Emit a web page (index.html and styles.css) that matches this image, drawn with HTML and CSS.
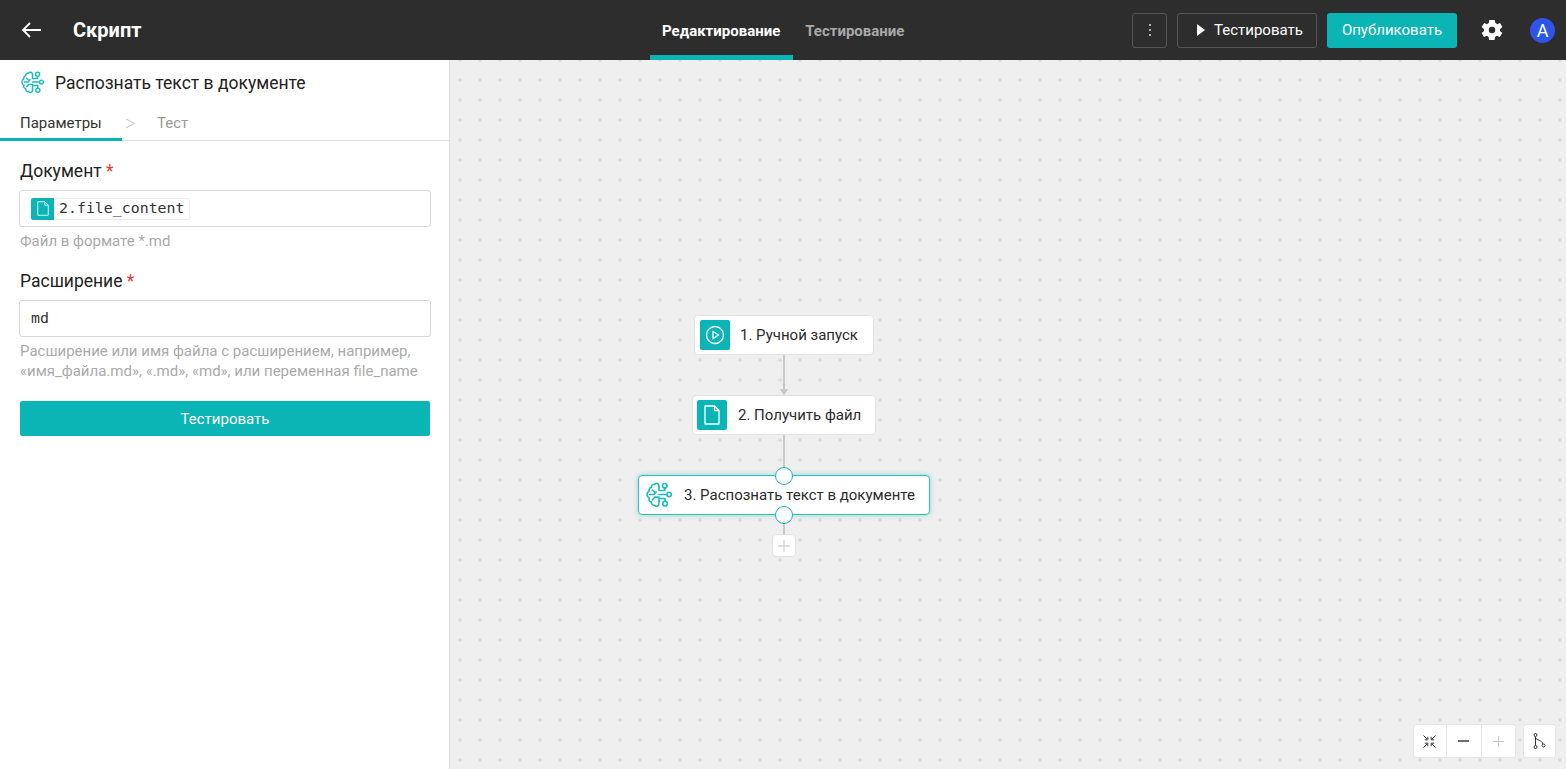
FILE: index.html
```html
<!DOCTYPE html>
<html lang="en">
<head>
  <meta charset="UTF-8" />
  <title>Скрипт</title>
  <link rel="stylesheet" href="styles.css">
</head>
<body>
  <svg class="defs" width="0" height="0">
    <symbol id="brain" viewBox="0 0 24 24" fill="none" stroke="currentColor" stroke-width="1.5" stroke-linecap="round" stroke-linejoin="round">
      <path d="M12 5.200V3.400a2.200 2.200 0 0 0-4-1.200 2.500 2.500 0 0 0-3.100 2.800 2.700 2.700 0 0 0-2 3.500A3.300 3.300 0 0 0 1 11.800a3.200 3.200 0 0 0 2 3 2.700 2.700 0 0 0 2 3.700 2.500 2.500 0 0 0 3 2.900 2.200 2.200 0 0 0 4-1.100v-2.600"/>
      <path d="M12 5.200v2.600h5.300V5.600M12 11.500h7.400M12 17.700v-2.500h5.500v2.600"/>
      <path d="M3.400 11.500h4l2-2.400M5.800 7.600l2.400 2M6 16.400l2-2.400h4"/>
      <circle cx="17.300" cy="3.500" r="2.100"/>
      <circle cx="21.400" cy="11.500" r="2"/>
      <circle cx="17.600" cy="20" r="2.100"/>
    </symbol>
    <symbol id="file" viewBox="0 0 16 20" fill="none" stroke="currentColor" stroke-width="1.300" stroke-linejoin="round">
      <path d="M1 1h9.500L15 5.500V19H1z"/>
      <path d="M10.500 1v4.500H15"/>
    </symbol>
  </svg>

  <header class="topbar">
    <div class="topbar-left">
      <svg class="back" width="20" height="16" viewBox="0 0 20 16" fill="none" stroke="#fff" stroke-width="1.800">
        <path d="M20 8H2M9 1L2 8l7 7"/>
      </svg>
      <span class="title">Скрипт</span>
    </div>
    <nav class="modes">
      <a class="mode active">Редактирование</a>
      <a class="mode">Тестирование</a>
    </nav>
    <div class="topbar-right">
      <button class="btn-outline btn-more">
        <svg width="4" height="14" viewBox="0 0 4 14" fill="#ddd"><circle cx="2" cy="2" r="1"/><circle cx="2" cy="7" r="1"/><circle cx="2" cy="12" r="1"/></svg>
      </button>
      <button class="btn-outline btn-test">
        <svg width="8" height="12" viewBox="0 0 8 12" fill="#fff"><path d="M0 0l8 6-8 6z"/></svg>
        Тестировать
      </button>
      <button class="btn-publish">Опубликовать</button>
      <svg class="gear" width="26" height="26" viewBox="0 0 24 24" fill="#fff">
        <path fill-rule="evenodd" d="M19.400 13a7.600 7.600 0 0 0 0-2l2.200-1.700-2.200-3.700-2.600 1a7.500 7.500 0 0 0-1.700-1L14.500 2.800h-5l-.4 2.800a7.500 7.500 0 0 0-1.700 1l-2.600-1-2.400 3.700L4.600 11a7.600 7.600 0 0 0 0 2l-2.200 1.700 2.200 3.700 2.600-1a7.500 7.500 0 0 0 1.700 1l.5 2.800h5l.4-2.800a7.500 7.500 0 0 0 1.700-1l2.600 1 2.400-3.700zM12 15a3 3 0 1 1 0-6 3 3 0 0 1 0 6z"/>
      </svg>
      <span class="avatar">A</span>
    </div>
  </header>

  <main class="workspace">
    <aside class="panel">
      <div class="panel-head">
        <svg class="panel-icon"><use href="#brain"/></svg>
        <span>Распознать текст в документе</span>
      </div>
      <div class="steps">
        <a class="step active">Параметры</a>
        <svg class="step-arrow" width="10" height="11" viewBox="0 0 10 11" fill="none" stroke="#cfcfcf" stroke-width="1.200"><path d="M1 1l8 4.500-8 4.500"/></svg>
        <a class="step">Тест</a>
      </div>
      <form class="params">
        <div class="field">
          <label class="field-label">Документ <em>*</em></label>
          <div class="input">
            <span class="token">
              <span class="token-icon"><svg width="12" height="15"><use href="#file"/></svg></span>
              <span class="token-text">2.file_content</span>
            </span>
          </div>
          <p class="hint">Файл в формате *.md</p>
        </div>
        <div class="field">
          <label class="field-label">Расширение <em>*</em></label>
          <div class="input input-text"><span class="token-text">md</span></div>
          <p class="hint">Расширение или имя файла с расширением, например, «имя_файла.md», «.md», «md», или переменная file_name</p>
        </div>
        <button type="button" class="btn-run">Тестировать</button>
      </form>
    </aside>

    <section class="canvas">
      <div class="edge edge-1"></div>
      <div class="edge-head"></div>
      <div class="edge edge-2"></div>
      <div class="edge edge-3"></div>

      <div class="node node-1">
        <span class="node-icon">
          <svg width="20" height="20" viewBox="0 0 20 20" fill="none" stroke="#fff" stroke-width="1.300"><circle cx="10" cy="10" r="8.500"/><path d="M8 6.200l5.500 3.800L8 13.800z" stroke-linejoin="round"/></svg>
        </span>
        1. Ручной запуск
      </div>
      <div class="node node-2">
        <span class="node-icon"><svg width="16" height="20"><use href="#file"/></svg></span>
        2. Получить файл
      </div>
      <div class="node node-3">
        <svg class="node-brain"><use href="#brain"/></svg>
        3. Распознать текст в документе
      </div>
      <span class="port port-top"></span>
      <span class="port port-bottom"></span>
      <button class="add-step">
        <svg width="12" height="12" viewBox="0 0 12 12" stroke="#d0d0d0" stroke-width="1.300"><path d="M6 0v12M0 6h12"/></svg>
      </button>

      <div class="zoom-tools">
        <div class="tool-group">
          <button class="tool">
            <svg width="13" height="13" viewBox="0 0 13 13" fill="none" stroke="#333" stroke-width="1"><path d="M0.500 0.500l3.500 3.500M4.800 1.800v3h-3M12.500 0.500L9 4M8.200 1.800v3h3M0.500 12.500L4 9M4.800 11.200v-3h-3M12.500 12.500L9 9M8.200 11.200v-3h3"/></svg>
          </button>
          <button class="tool">
            <svg width="11" height="2" viewBox="0 0 11 2" stroke="#222" stroke-width="1.300"><path d="M0 1h11"/></svg>
          </button>
          <button class="tool">
            <svg width="11" height="11" viewBox="0 0 11 11" stroke="#c8c8c8" stroke-width="1"><path d="M5.500 0v11M0 5.500h11"/></svg>
          </button>
        </div>
        <button class="tool tool-single">
          <svg width="13" height="16" viewBox="0 0 13 16" fill="none" stroke="#333" stroke-width="1"><circle cx="2.500" cy="2" r="1.500"/><circle cx="2.500" cy="14" r="1.500"/><circle cx="10.500" cy="12.500" r="1.500"/><path d="M2.500 3.500v9M3 5c0 2 6 2 7 6"/></svg>
        </button>
      </div>
    </section>
  </main>
</body>
</html>
```

FILE: styles.css
```css
* {
  box-sizing: border-box;
}

html,
body {
  height: 100%;
}

body {
  margin: 0;
  font-family: Roboto, "Noto Sans", sans-serif;
  color: #222;
  background: #fff;
  overflow: hidden;
}

button {
  font-family: inherit;
  cursor: pointer;
}

.defs {
  position: absolute;
}

/* top bar */
.topbar {
  display: flex;
  align-items: center;
  height: 60px;
  background: #2d2d2d;
  color: #fff;
}

.topbar-left {
  display: flex;
  align-items: center;
  width: 650px;
  padding-left: 21px;
}

.back {
  margin-right: 32px;
}

.title {
  font-size: 20px;
  font-weight: 700;
}

.modes {
  display: flex;
  height: 60px;
}

.mode {
  display: flex;
  align-items: center;
  padding: 2px 13px 0 12px;
  font-size: 15px;
  font-weight: 700;
  color: #a9a9a9;
  border-bottom: 5px solid transparent;
  border-top: 5px solid transparent;
}

.mode.active {
  color: #fff;
  border-bottom-color: #0bb5b5;
}

.topbar-right {
  display: flex;
  align-items: center;
  margin-left: auto;
  padding-right: 11px;
}

.btn-outline {
  display: flex;
  align-items: center;
  justify-content: center;
  height: 35px;
  background: transparent;
  color: #fff;
  border: 1px solid #555;
  border-radius: 3px;
  font-size: 15px;
}

.btn-more {
  width: 35px;
  margin-right: 10px;
}

.btn-test {
  justify-content: flex-start;
  gap: 9px;
  width: 140px;
  margin-right: 10px;
  padding: 0 0 0 19px;
}

.btn-publish {
  width: 130px;
  height: 35px;
  background: #0bb5b5;
  color: #fff;
  border: none;
  border-radius: 3px;
  font-size: 15px;
}

.gear {
  margin-left: 22px;
}

.avatar {
  display: flex;
  align-items: center;
  justify-content: center;
  width: 25px;
  height: 25px;
  margin-left: 25px;
  background: #2f55e8;
  border-radius: 50%;
  font-size: 18px;
}

.workspace {
  display: flex;
  height: 709px;
}

/* left panel */
.panel {
  width: 450px;
  flex-shrink: 0;
  background: #fff;
  border-right: 1px solid #ddd;
}

.panel-head {
  display: flex;
  align-items: center;
  height: 45px;
  margin-bottom: 1px;
  padding-left: 21px;
  font-size: 17.500px;
  color: #222;
}

.panel-icon {
  width: 23px;
  height: 23px;
  margin-right: 11px;
  color: #1cbcbc;
}

.steps {
  display: flex;
  align-items: center;
  height: 35px;
  border-bottom: 1px solid #ddd;
  font-size: 15px;
}

.step {
  display: flex;
  align-items: center;
  height: 35px;
  color: #9a9a9a;
}

.step.active {
  width: 122px;
  padding-left: 20px;
  color: #333;
  border-bottom: 3px solid #0bb5b5;
  padding-top: 3px;
}

.step-arrow {
  margin: 0 22px 0 3px;
}

.params {
  padding: 18px 19px 0;
}

.field {
  margin-bottom: 18px;
}

.field-label {
  display: block;
  height: 31px;
  padding: 0 1px;
  font-size: 17.500px;
  line-height: 24px;
}

.field-label em {
  font-style: normal;
  color: #e53935;
}

.input {
  display: flex;
  align-items: center;
  width: 412px;
  height: 37px;
  padding-left: 11px;
  border: 1px solid #d8d8d8;
  border-radius: 3px;
  background: #fff;
}

.input-text {
  font-family: "DejaVu Sans Mono", monospace;
  font-size: 14.900px;
  color: #333;
}

.token {
  display: flex;
  align-items: center;
  height: 22px;
  border: 1px solid #eee;
  border-radius: 2px;
  font-family: "DejaVu Sans Mono", monospace;
  font-size: 14.900px;
  color: #333;
}

.token-icon {
  display: flex;
  align-items: center;
  justify-content: center;
  width: 23px;
  height: 22px;
  margin: 0 5px 0 -1px;
  background: #0bb5b5;
  border-radius: 2px 0 0 2px;
  color: #d8f5f5;
}

.token-text {
  padding: 0 4px 2px 0;
}

.hint {
  margin: 4px 1px 0;
  font-size: 15px;
  line-height: 20px;
  color: #aaa;
}

.btn-run {
  display: block;
  width: 410px;
  height: 35px;
  margin: 20px 0 0 1px;
  background: #0bb5b5;
  color: #fff;
  border: none;
  border-radius: 2px;
  font-size: 15px;
}

/* canvas */
.canvas {
  position: relative;
  flex: 1;
  background-color: #efefef;
  background-image: radial-gradient(circle at center, #dcdcdc 1.500px, transparent 2px);
  background-size: 20px 20px;
  background-position: 0 -10px;
}

.node {
  position: absolute;
  display: flex;
  align-items: center;
  height: 40px;
  background: #fff;
  border: 1px solid #e2e2e2;
  border-radius: 4px;
  font-size: 15px;
  color: #2b2b2b;
}

.node-icon {
  display: flex;
  align-items: center;
  justify-content: center;
  width: 30px;
  height: 30px;
  background: #0bb5b5;
  border-radius: 2px;
  color: #fff;
}

.node-1 {
  left: 244px;
  top: 255px;
  width: 180px;
  padding-left: 5px;
  gap: 10px;
}

.node-2 {
  left: 242px;
  top: 335px;
  width: 184px;
  padding-left: 4px;
  gap: 11px;
}

.node-3 {
  left: 188px;
  top: 415px;
  width: 292px;
  padding-left: 7px;
  gap: 12px;
  border-color: #2cc0c0;
  box-shadow: 0 0 5px rgba(11, 181, 181, 0.45);
}

.node-brain {
  width: 26px;
  height: 28px;
  color: #1cbcbc;
}

.edge {
  position: absolute;
  left: 333px;
  width: 2px;
  background: #c8c8c8;
}

.edge-1 {
  top: 295px;
  height: 34px;
}

.edge-head {
  position: absolute;
  left: 330px;
  top: 329px;
  border-left: 4px solid transparent;
  border-right: 4px solid transparent;
  border-top: 7px solid #c8c8c8;
}

.edge-2 {
  top: 375px;
  height: 32px;
}

.edge-3 {
  top: 462px;
  height: 12px;
}

.port {
  position: absolute;
  left: 325px;
  width: 18px;
  height: 18px;
  background: #fff;
  border: 1px solid #1cb5b5;
  border-radius: 50%;
}

.port-top {
  top: 407px;
}

.port-bottom {
  top: 446px;
}

.add-step {
  position: absolute;
  left: 322px;
  top: 474px;
  display: flex;
  align-items: center;
  justify-content: center;
  width: 24px;
  height: 23px;
  padding: 0;
  background: #fff;
  border: 1px solid #e2e2e2;
  border-radius: 4px;
}

.zoom-tools {
  position: absolute;
  right: 10px;
  bottom: 11px;
  display: flex;
  gap: 7px;
}

.tool-group {
  display: flex;
}

.tool {
  display: flex;
  align-items: center;
  justify-content: center;
  width: 34.500px;
  height: 34px;
  padding: 0;
  background: #fff;
  border: 1px solid #e6e6e6;
  border-left: none;
}

.tool-group .tool:first-child {
  border-left: 1px solid #e6e6e6;
  border-radius: 3px 0 0 3px;
}

.tool-group .tool:last-child {
  border-radius: 0 3px 3px 0;
}

.tool-single {
  width: 33px;
  border-left: 1px solid #e6e6e6;
  border-radius: 3px;
}
```
